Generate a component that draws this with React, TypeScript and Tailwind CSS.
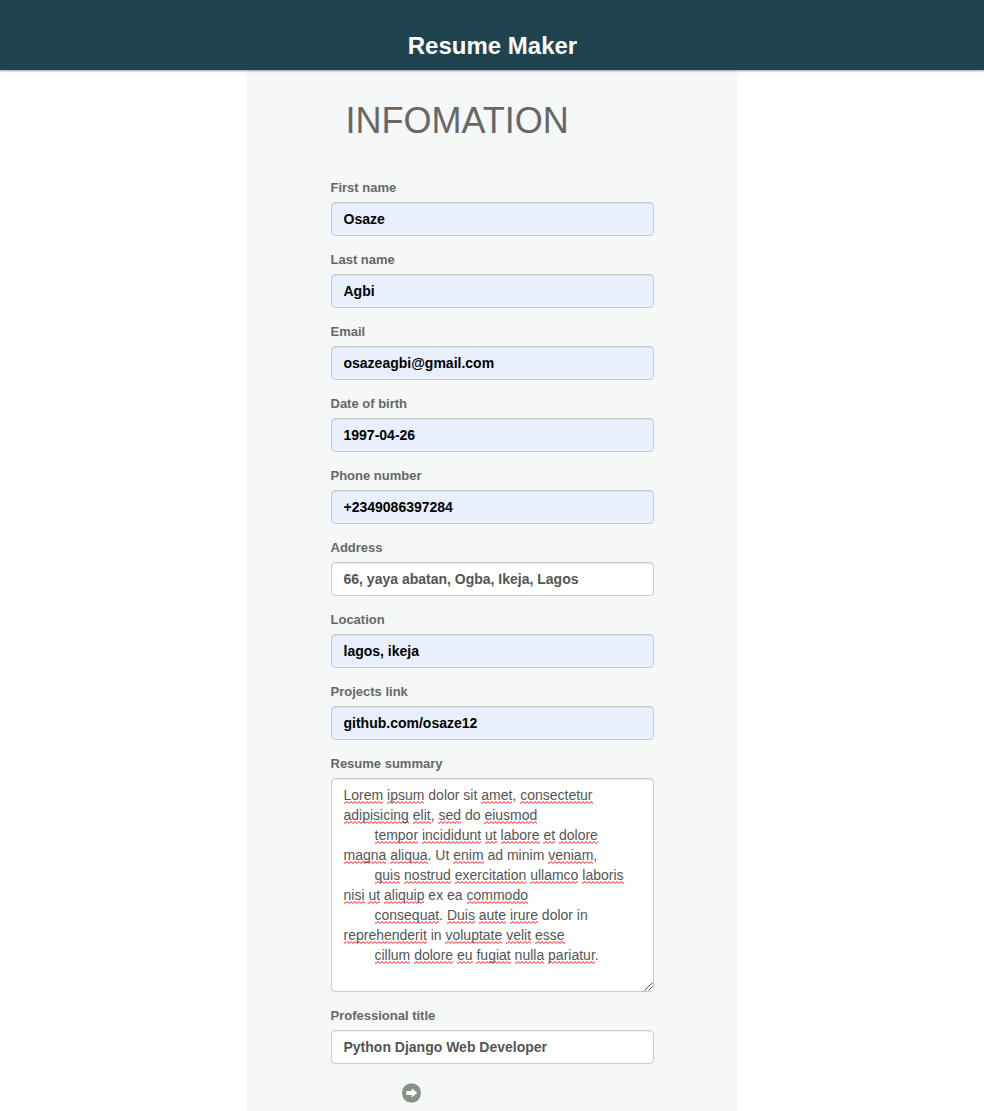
import React from "react";

type FieldProps = { label: string; value: string; autofilled?: boolean; type?: string };

function Field({ label, value, autofilled = true, type = "text" }: FieldProps) {
  return (
    <label className="mb-[15px] block">
      <span className="-ml-[0.5px] mb-[5px] block h-[18px] text-[13px] leading-[18px] font-bold text-[#676767]">{label}</span>
      <input
        type={type}
        defaultValue={value}
        className={
          "block h-[34px] w-full rounded-[4px] border border-[#cccccc] px-[11.5px] py-1.5 text-[14px] leading-5 font-bold shadow-[inset_0_1px_1px_rgba(0,0,0,0.075)] outline-none " +
          (autofilled ? "bg-[#e8f0fe] text-black" : "bg-white text-[#555555]")
        }
      />
    </label>
  );
}

const fields: FieldProps[] = [
  { label: "First name", value: "Osaze" },
  { label: "Last name", value: "Agbi" },
  { label: "Email", value: "osazeagbi@gmail.com" },
  { label: "Date of birth", value: "1997-04-26" },
  { label: "Phone number", value: "+2349086397284" },
  { label: "Address", value: "66, yaya abatan, Ogba, Ikeja, Lagos", autofilled: false },
  { label: "Location", value: "lagos, ikeja" },
  { label: "Projects link", value: "github.com/osaze12" },
];

// Words between asterisks carry the spell-check underline.
const summary = [
  { text: "*Lorem* *ipsum* dolor sit *amet*, *consectetur*" },
  { text: "*adipisicing* *elit*, *sed* do *eiusmod*" },
  { text: "*tempor* *incididunt* *ut* *labore* *et* *dolore*", indent: true },
  { text: "*magna* *aliqua*. Ut *enim* ad minim *veniam*," },
  { text: "*quis* *nostrud* *exercitation* *ullamco* *laboris*", indent: true },
  { text: "*nisi* *ut* *aliquip* ex ea *commodo*" },
  { text: "*consequat*. *Duis* *aute* *irure* dolor in", indent: true },
  { text: "*reprehenderit* in *voluptate* *velit* *esse*" },
  { text: "*cillum* *dolore* *eu* *fugiat* *nulla* *pariatur*.", indent: true },
];

const squiggle = {
  backgroundImage:
    "url(\"data:image/svg+xml,%3Csvg xmlns='http://www.w3.org/2000/svg' width='4' height='3'%3E%3Cpath d='M-1 .5L1 2.5L3 .5L5 2.5' fill='none' stroke='%23ff1010' stroke-width='1'/%3E%3C/svg%3E\")",
};

function Spelled({ text }: { text: string }) {
  return (
    <>
      {text.split("*").map((part, i) =>
        i % 2 ? (
          <span key={i} className="bg-bottom-left bg-repeat-x pb-px" style={squiggle}>
            {part}
          </span>
        ) : (
          part
        ),
      )}
    </>
  );
}

export default function App() {
  return (
    <div className="h-[1111px] overflow-hidden bg-white font-['Liberation_Sans',Arial,sans-serif]">
      <header className="relative h-[70px] bg-[#1f434f] pt-8 pl-px text-center shadow-[0_1px_2px_rgba(0,0,0,0.4)]">
        <h1 className="text-[24px] leading-[27px] font-bold text-white">Resume Maker</h1>
      </header>
      <main className="mx-auto h-[1041px] w-[492px] bg-[#f5f8f7] pt-[31px]">
        <h2 className="ml-[99.5px] text-[36px] leading-10 text-[#676767]">INFOMATION</h2>
        <form className="mt-[38px] ml-[85px] w-[323px]">
          {fields.map((f) => (
            <Field key={f.label} {...f} />
          ))}
          <div className="mb-[15px]">
            <span className="-ml-[0.5px] mb-[5px] block h-[18px] text-[13px] leading-[18px] font-bold text-[#676767]">
              Resume summary
            </span>
            <div className="relative h-[214px] rounded-[4px] border border-[#cccccc] bg-white px-[11.5px] py-1.5 text-[14px] leading-5 whitespace-nowrap text-[#555555] shadow-[inset_0_1px_1px_rgba(0,0,0,0.075)]">
              {summary.map((line) => (
                <div key={line.text} className={line.indent ? "pl-[31px]" : ""}>
                  <Spelled text={line.text} />
                </div>
              ))}
              <svg className="absolute right-0 bottom-0" width="9" height="9" viewBox="0 0 9 9" stroke="#555" strokeWidth="1">
                <path d="M.5 8.5L8.5 .5M4.5 8.5L8.5 4.5" />
              </svg>
            </div>
          </div>
          <Field label="Professional title" value="Python Django Web Developer" autofilled={false} />
          <button type="button" aria-label="Next" className="mt-[19px] ml-[71px] block">
            <svg width="19" height="20" viewBox="0 0 19 20">
              <ellipse cx="9.5" cy="10" rx="9.5" ry="9.8" fill="#859285" />
              <path d="M4.3 8H9.7V5.2L15.3 10L9.7 14.4V12H4.3Z" fill="#fff" />
            </svg>
          </button>
        </form>
      </main>
    </div>
  );
}
